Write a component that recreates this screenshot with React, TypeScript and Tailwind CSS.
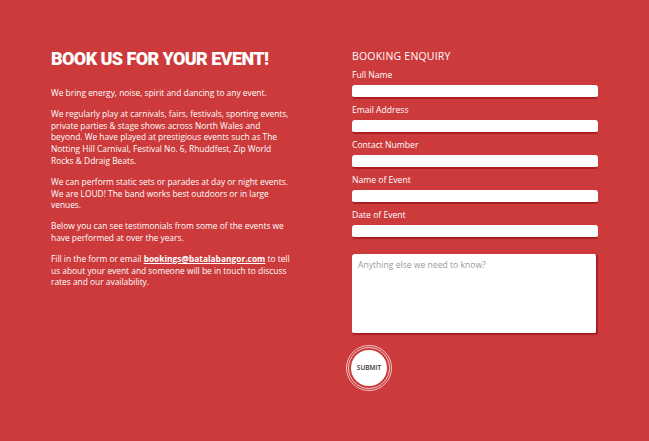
import React from "react";

const fields = ["Full Name", "Email Address", "Contact Number", "Name of Event", "Date of Event"];

const App: React.FC = () => {
  return (
    <div
      className="min-h-[441px] w-full bg-[#cc3a3b] text-white"
      style={{ fontFamily: '"Open Sans", "Liberation Sans", sans-serif' }}
    >
      <div className="flex justify-between px-[51px] pt-[48px]">
        <div className="w-[241px]">
          <h1
            className="whitespace-nowrap text-[18px] font-black leading-[22px] tracking-[-0.6px]"
            style={{ fontFamily: 'Roboto, "Liberation Sans", sans-serif' }}
          >
            BOOK US FOR YOUR EVENT!
          </h1>
          <div className="mt-[17px] space-y-[9px] text-[8.4px] leading-[11.8px]">
            <p>We bring energy, noise, spirit and dancing to any event.</p>
            <p>
              We regularly play at carnivals, fairs, festivals, sporting events, private parties &amp; stage
              shows across North Wales and beyond. We have played at prestigious events such as The Notting
              Hill Carnival, Festival No. 6, Rhuddfest, Zip World Rocks &amp; Ddraig Beats.
            </p>
            <p>
              We can perform static sets or parades at day or night events. We are LOUD! The band works best
              outdoors or in large venues.
            </p>
            <p>Below you can see testimonials from some of the events we have performed at over the years.</p>
            <p>
              Fill in the form or email <span className="font-bold underline">bookings@batalabangor.com</span> to
              tell us about your event and someone will be in touch to discuss rates and our availability.
            </p>
          </div>
        </div>
        <div className="w-[246px] pt-[1px]">
          <h2 className="text-[10.5px] leading-[14px] tracking-[0.2px]">BOOKING ENQUIRY</h2>
          <div className="mt-[5px] flex flex-col">
            {fields.map((f) => (
              <div key={f} className="mb-[4px]">
                <label className="block text-[8.6px] leading-[14px]">{f}</label>
                <div className="mt-[3px] h-[14px] rounded-[3px] border-b-2 border-[#a81e22] bg-white" />
              </div>
            ))}
          </div>
          <div className="mt-[11px] h-[81px] rounded-[3px] border-b-2 border-r-2 border-[#a81e22] bg-white px-[6px] py-[5px] text-[8.6px] text-[#9a9a9a]">
            Anything else we need to know?
          </div>
          <div className="mt-[10px] ml-[-6px] flex h-[46px] w-[46px] items-center justify-center rounded-full border border-white/70">
            <div className="flex h-[42px] w-[42px] items-center justify-center rounded-full border border-white/70">
              <div className="flex h-[36px] w-[36px] items-center justify-center rounded-full bg-white text-[6.5px] font-semibold text-[#333]">
                SUBMIT
              </div>
            </div>
          </div>
        </div>
      </div>
    </div>
  );
};

export default App;
